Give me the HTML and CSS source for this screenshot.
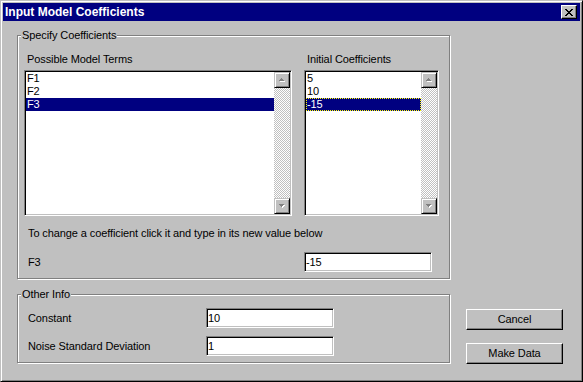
FILE: index.html
```html
<!DOCTYPE html>
<html lang="en">
<head>
    <meta charset="UTF-8">
    <meta name="viewport" content="width=device-width, initial-scale=1.0">
    <link rel="stylesheet" href="styles.css">
    <title>Input Model Coefficients</title>
</head>
<body>
    <div class="window">
        <div class="titlebar">
            <span class="title">Input Model Coefficients</span>
            <button class="close" aria-label="Close">
                <svg width="8" height="7" viewBox="0 0 8 7" shape-rendering="crispEdges">
                    <path fill="#000" d="M0 0h2v1H0zM6 0h2v1H6zM1 1h2v1H1zM5 1h2v1H5zM2 2h4v1H2zM3 3h2v1H3zM2 4h4v1H2zM1 5h2v1H1zM5 5h2v1H5zM0 6h2v1H0zM6 6h2v1H6z"/>
                </svg>
            </button>
        </div>

        <div class="dialog-body">
            <div class="groups">
                <div class="group group-coef">
                    <span class="legend">Specify Coefficients</span>

                    <div class="coef-grid">
                        <div class="col">
                            <div class="col-label">Possible Model Terms</div>
                            <div class="listbox">
                                <ul class="items">
                                    <li>F1</li>
                                    <li>F2</li>
                                    <li class="selected">F3</li>
                                </ul>
                                <div class="scrollbar">
                                    <div class="arrow">
                                        <svg width="7" height="4" viewBox="0 0 7 4" shape-rendering="crispEdges">
                                            <path fill="#fff" d="M1 3h5v1H1z"/>
                                            <path fill="#808080" d="M2 0h1v1H2zM1 1h3v1H1zM0 2h5v1H0z"/>
                                        </svg>
                                    </div>
                                    <div class="track"></div>
                                    <div class="arrow">
                                        <svg width="7" height="4" viewBox="0 0 7 4" shape-rendering="crispEdges">
                                            <path fill="#fff" d="M4 1h2v1H4zM3 2h2v1H3zM3 3h1v1H3z"/>
                                            <path fill="#808080" d="M0 0h5v1H0zM1 1h3v1H1zM2 2h1v1H2z"/>
                                        </svg>
                                    </div>
                                </div>
                            </div>
                        </div>

                        <div class="col">
                            <div class="col-label">Initial Coefficients</div>
                            <div class="listbox">
                                <ul class="items">
                                    <li>5</li>
                                    <li>10</li>
                                    <li class="selected focused">-15</li>
                                </ul>
                                <div class="scrollbar">
                                    <div class="arrow">
                                        <svg width="7" height="4" viewBox="0 0 7 4" shape-rendering="crispEdges">
                                            <path fill="#fff" d="M1 3h5v1H1z"/>
                                            <path fill="#808080" d="M2 0h1v1H2zM1 1h3v1H1zM0 2h5v1H0z"/>
                                        </svg>
                                    </div>
                                    <div class="track"></div>
                                    <div class="arrow">
                                        <svg width="7" height="4" viewBox="0 0 7 4" shape-rendering="crispEdges">
                                            <path fill="#fff" d="M4 1h2v1H4zM3 2h2v1H3zM3 3h1v1H3z"/>
                                            <path fill="#808080" d="M0 0h5v1H0zM1 1h3v1H1zM2 2h1v1H2z"/>
                                        </svg>
                                    </div>
                                </div>
                            </div>
                        </div>
                    </div>

                    <p class="hint">To change a coefficient click it and type in its new value below</p>

                    <div class="edit-row">
                        <span class="edit-label">F3</span>
                        <input type="text" class="field" value="-15">
                    </div>
                </div>

                <div class="group group-other">
                    <span class="legend">Other Info</span>
                    <label for="constant">Constant</label>
                    <input type="text" id="constant" class="field" value="10">
                    <label for="noise">Noise Standard Deviation</label>
                    <input type="text" id="noise" class="field" value="1">
                </div>
            </div>

            <div class="buttons">
                <button class="btn">Cancel</button>
                <button class="btn">Make Data</button>
            </div>
        </div>
    </div>
</body>
</html>
```

FILE: styles.css
```css
* {
    box-sizing: border-box;
}

body {
    margin: 0;
    background-color: #c0c0c0;
    font-family: "Liberation Sans", Arial, sans-serif;
    font-size: 11px;
    line-height: 13px;
    letter-spacing: -0.1px;
    color: #000;
}

.window {
    width: 583px;
    height: 382px;
    padding: 2px;
    display: flex;
    flex-direction: column;
    background-color: #c0c0c0;
    border: 1px solid;
    border-color: #c0c0c0 #000 #000 #c0c0c0;
    box-shadow: inset 1px 1px #fff, inset -1px -1px #808080;
}

.titlebar {
    height: 18px;
    padding: 0 3px 0 2px;
    display: flex;
    align-items: center;
    justify-content: space-between;
    background-color: #000080;
    color: #fff;
}

.title {
    font-weight: bold;
    font-size: 12px;
    letter-spacing: 0;
}

.close {
    width: 16px;
    height: 14px;
    padding: 0;
    display: flex;
    align-items: center;
    justify-content: center;
    background-color: #c0c0c0;
    border: 1px solid;
    border-color: #fff #000 #000 #fff;
    box-shadow: inset -1px -1px #808080;
}

.dialog-body {
    display: flex;
    align-items: flex-end;
    padding: 14px 0 0 14px;
}

.groups {
    width: 433px;
}

.group {
    position: relative;
    border: 1px solid #808080;
    box-shadow: inset 1px 1px #fff, 1px 1px #fff;
}

.legend {
    position: absolute;
    top: -7px;
    left: 3px;
    padding: 0 1px;
    background-color: #c0c0c0;
}

.group-coef {
    height: 244px;
    padding: 17px 0 0 6px;
}

.coef-grid {
    display: grid;
    grid-template-columns: 268px 135px;
    column-gap: 12px;
}

.col-label {
    padding-left: 3px;
    margin-bottom: 4px;
}

.listbox {
    height: 146px;
    padding: 1px;
    display: flex;
    background-color: #fff;
    border: 1px solid;
    border-color: #808080 #fff #fff #808080;
    box-shadow: inset 1px 1px #000, inset -1px -1px #c0c0c0;
}

.items {
    flex: 1;
    margin: 0;
    padding: 0;
    list-style: none;
}

.items li {
    height: 13px;
    padding-left: 1px;
}

.items li.selected {
    background-color: #000080;
    color: #fff;
}

.items li.focused {
    outline: 1px dotted #ffff00;
    outline-offset: -1px;
}

.scrollbar {
    width: 16px;
    display: flex;
    flex-direction: column;
}

.arrow {
    height: 16px;
    display: flex;
    align-items: center;
    justify-content: center;
    background-color: #c0c0c0;
    border: 1px solid;
    border-color: #c0c0c0 #000 #000 #c0c0c0;
    box-shadow: inset 1px 1px #fff, inset -1px -1px #808080;
}

.track {
    flex: 1;
    background: repeating-conic-gradient(#fff 0 25%, #c0c0c0 0 50%) 0 0 / 2px 2px;
}

.hint {
    margin: 11px 0 0 4px;
}

.edit-row {
    margin-top: 12px;
    display: grid;
    grid-template-columns: 268px 128px;
    column-gap: 12px;
    align-items: center;
}

.edit-label {
    padding-left: 4px;
}

.field {
    width: 128px;
    height: 20px;
    margin: 0;
    padding: 0 1px;
    font: inherit;
    letter-spacing: inherit;
    color: #000;
    background-color: #fff;
    border: 1px solid;
    border-color: #808080 #fff #fff #808080;
    box-shadow: inset 1px 1px #000, inset -1px -1px #c0c0c0;
    outline: none;
}

.group-other {
    margin-top: 15px;
    height: 69px;
    padding: 13px 0 0 10px;
    display: grid;
    grid-template-columns: 178px 128px;
    grid-auto-rows: 20px;
    row-gap: 8px;
    align-items: center;
}

.buttons {
    margin: 0 0 -1px 16px;
    display: flex;
    flex-direction: column;
    gap: 13px;
}

.btn {
    width: 97px;
    height: 21px;
    padding: 0;
    font: inherit;
    letter-spacing: inherit;
    color: #000;
    background-color: #c0c0c0;
    border: 1px solid;
    border-color: #fff #000 #000 #fff;
    box-shadow: inset -1px -1px #808080;
}
```
